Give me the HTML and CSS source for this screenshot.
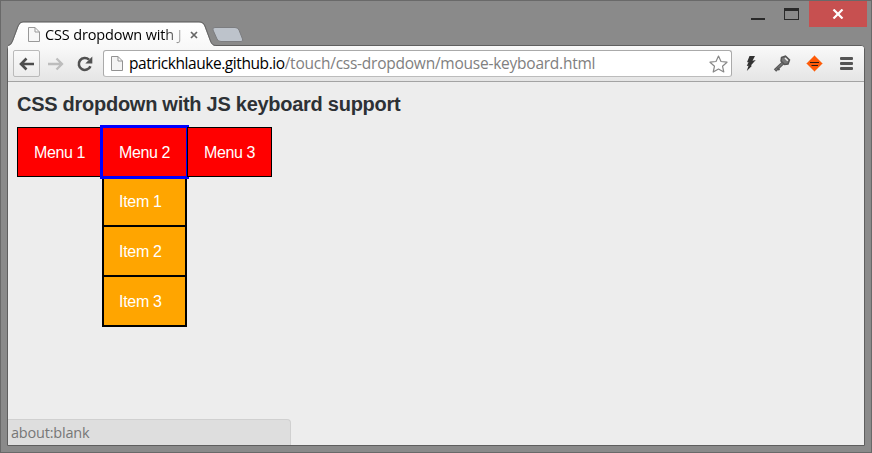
FILE: index.html
```html
<!DOCTYPE html>
<html lang="en">
<head>
<meta charset="utf-8">
<title>CSS dropdown with JS keyboard support</title>
<link rel="stylesheet" href="styles.css">
</head>
<body>
<div class="window">
  <header class="titlebar">
    <div class="tab">
      <svg class="tab-shape" width="208" height="27" viewBox="0 0 208 27">
        <defs><linearGradient id="tabfill" x1="0" y1="0" x2="0" y2="1"><stop offset="0" stop-color="#fff"/><stop offset="1" stop-color="#f8f8f8"/></linearGradient></defs>
        <path d="M0 27V25Q3.5 24.5 5 20L10.500 5.500Q12 1.500 15 1.500H191Q195 1.500 196.500 5.500L202 20Q204 25 208 25V27Z" fill="url(#tabfill)"/>
        <path d="M0 24.500Q3 24 4.500 20L10 5Q11.500 .8 15 .8H191Q195.500 .8 197 5L202.500 20Q204 24.500 208 24.500" fill="none" stroke="#666"/>
      </svg>
      <svg class="tab-page" width="12" height="15" viewBox="0 0 12 15"><path d="M.5 .5H7L11.500 5V14.500H.5Z M7 .5V5H11.500" fill="#f7f7f7" stroke="#999"/></svg>
      <span class="tab-title">CSS dropdown with J</span>
      <svg class="tab-close" width="8" height="8" viewBox="0 0 8 8"><path d="M1 1L7 7M7 1L1 7" stroke="#666" stroke-width="1.700"/></svg>
    </div>
    <svg class="new-tab" width="34" height="18" viewBox="0 0 34 18"><path d="M4 1.500H24Q27 1.500 28 4L31.500 13Q32.500 15.500 30 15.500H10Q7 15.500 6 13L2 4Q1 1.500 4 1.500Z" fill="#bdc3cb" stroke="#7c7d80"/></svg>
    <div class="controls">
      <i class="minimize"></i><i class="maximize"></i>
      <span class="close"><svg width="12" height="10" viewBox="0 0 12 10"><path d="M1.500 .5L10.500 9.500M10.500 .5L1.500 9.500" stroke="#fff" stroke-width="2.200"/></svg></span>
    </div>
  </header>
  <div class="frame">
    <nav class="toolbar">
      <span class="back"><svg width="16" height="14" viewBox="0 0 16 14"><path d="M15 7H2.500M7.500 1.500L2 7L7.500 12.500" fill="none" stroke="#4d4d4d" stroke-width="2.600"/></svg></span>
      <svg class="forward" width="16" height="14" viewBox="0 0 16 14"><path d="M0 7H13.500M8.500 1.500L14 7L8.500 12.500" fill="none" stroke="#bdbdbd" stroke-width="2.300"/></svg>
      <svg class="reload" width="16" height="16" viewBox="0 0 16 16"><path d="M13.400 10.200A6 6 0 1 1 12 3.600" fill="none" stroke="#515151" stroke-width="2.600"/><path d="M15.300 .5V7.500H8.300Z" fill="#515151"/></svg>
      <div class="address">
        <svg class="page" width="12" height="15" viewBox="0 0 12 15"><path d="M.5 .5H7L11.500 5V14.500H.5Z M7 .5V5H11.500" fill="#f4f4f4" stroke="#929292"/></svg>
        <span class="url"><b>patrickhlauke.github.io</b><span>/touch/css-dropdown/mouse-keyboard.html</span></span>
        <svg class="star" width="19" height="18" viewBox="0 0 19 18"><path d="M9.500 1L12 6.500L18 7.200L13.500 11.200L14.800 17L9.500 14L4.200 17L5.500 11.200L1 7.200L7 6.500Z" fill="#fff" stroke="#888" stroke-width="1.200" stroke-linejoin="round"/></svg>
      </div>
      <svg class="bolt" width="10" height="15" viewBox="0 0 10 15"><path d="M3.500 0H9L6.500 4.800L9.800 4L4.800 9.500L6 9.700L.8 15L2.500 9.800L.8 10L2.500 6L1 6.200Z" fill="#333"/></svg>
      <svg class="key" width="18" height="17" viewBox="0 0 18 17"><path d="M10.500 7.500L2 15.500" stroke="#555" stroke-width="3.400"/><path d="M10.500 7.500L2.500 15" stroke="#777" stroke-width="1.400"/><path d="M4.500 13L6.500 15" stroke="#555" stroke-width="1.800"/><path d="M8.500 2.500L12.500 1L16.500 5L15 9L11.500 9.500L8 6Z" fill="#777" stroke="#555" stroke-width="1.500"/><path d="M12 3L14.800 5.800" stroke="#eee" stroke-width="1.500"/></svg>
      <svg class="diamond" width="17" height="17" viewBox="0 0 17 17"><path d="M8.500 .5L16.500 8.500L8.500 16.500L.5 8.500Z" fill="#ff5a08" stroke="#f2a878" stroke-width=".6"/><path d="M4 7.500H13M5.500 10.500H12" stroke="#2d1b12" stroke-width="1.200"/></svg>
      <span class="hamburger"><i></i><i></i><i></i></span>
    </nav>
    <main class="page-body">
      <h1>CSS dropdown with JS keyboard support</h1>
      <ul class="menu">
        <li>Menu 1</li>
        <li class="open">Menu 2
          <ul class="dropdown"><li>Item 1</li><li>Item 2</li><li>Item 3</li></ul>
        </li>
        <li>Menu 3</li>
      </ul>
      <div class="status">about:blank</div>
    </main>
  </div>
</div>
</body>
</html>
```
FILE: styles.css
```css
* { box-sizing: border-box; }
body { margin: 0; overflow: hidden; }
ul { list-style: none; margin: 0; padding: 0; }
svg { display: block; flex: none; }
.window { width: 872px; height: 453px; background: #8a8a8a; border: 1px solid #696969; display: flex; flex-direction: column; padding: 0 6px; }
.titlebar { height: 44px; display: flex; align-items: flex-start; flex: none; font-family: "Open Sans", sans-serif; }
.tab { position: relative; z-index: 2; width: 208px; height: 27px; margin: 20px 0 0 1px; display: flex; align-items: center; flex: none; }
.tab-shape { position: absolute; left: 0; top: 0; }
.tab-page { position: relative; margin-left: 20px; }
.tab-title { position: relative; width: 137px; margin-left: 5px; white-space: nowrap; font: 14.500px/20px "Open Sans", sans-serif; letter-spacing: -.15px; color: #000; -webkit-mask-image: linear-gradient(90deg, #000 86%, transparent 104%); mask-image: linear-gradient(90deg, #000 86%, transparent 104%); }
.tab-close { position: relative; margin-left: 8px; }
.new-tab { margin: 25px 0 0 -5px; }
.controls { display: flex; margin-left: auto; align-items: flex-start; }
.minimize { width: 14px; height: 2px; background: #292929; margin: 17px 19px 0 0; }
.maximize { width: 15px; height: 12px; border: 1px solid #292929; border-top-width: 3px; margin: 7px 10px 0 0; }
.close { width: 58px; height: 26px; background: #c75050; display: flex; align-items: center; justify-content: center; margin-right: -2px; }
.frame { width: 858px; height: 401px; flex: none; border: 1px solid #5e5e5e; border-radius: 4px 4px 0 0; background: #ededed; display: flex; flex-direction: column; overflow: hidden; }
.toolbar { height: 36px; flex: none; display: flex; align-items: center; background: linear-gradient(#f9f9f9, #e5e5e5); border-bottom: 1px solid #a3a3a3; padding-left: 5px; }
.back { width: 27px; height: 27px; border: 1px solid #bababa; border-radius: 2px; background: linear-gradient(#fafafa, #ececec); display: flex; align-items: center; justify-content: center; }
.forward { margin-left: 8px; }
.reload { margin-left: 13px; }
.address { width: 629px; height: 27px; margin-left: 10px; border: 1px solid #aaa; border-bottom-color: #bcbcbc; border-radius: 3px; background: #fff; display: flex; align-items: center; padding: 0 3px 0 7px; }
.url { margin-left: 6px; font: 15.500px/23px "Open Sans", sans-serif; color: #808080; white-space: nowrap; letter-spacing: -.24px; }
.url b { font-weight: 400; color: #000; letter-spacing: -.43px; }
.star { margin-left: auto; }
.bolt { margin-left: 14px; }
.key { margin-left: 17px; }
.diamond { margin-left: 15px; }
.hamburger { margin-left: 17px; width: 13px; display: grid; gap: 2px; }
.hamburger i { height: 3px; background: #555; border-radius: 1px; }
.page-body { position: relative; flex: 1; padding: 10px 9px 0; font: 16px/24px "Liberation Sans", sans-serif; }
h1 { margin: 0 0 11px; font-size: 20px; line-height: 24px; color: #2d3135; letter-spacing: -.27px; }
.menu { display: flex; color: #fff; letter-spacing: -.4px; }
.menu > li { position: relative; width: 85px; height: 50px; background: #f00; border: 1px solid #000; line-height: 49px; padding-left: 16px; }
.menu > .open { outline: 3px solid #00f; outline-offset: -1px; }
.dropdown { position: absolute; left: -1px; top: 51px; width: 85px; border: 2px solid #000; border-top: 0; background: orange; letter-spacing: -.3px; }
.dropdown li { height: 50px; padding-left: 15px; line-height: 50px; }
.dropdown li:first-child { height: 46px; line-height: 45px; }
.dropdown li + li { border-top: 2px solid #000; }
.status { position: absolute; left: 0; bottom: 0; width: 283px; height: 26px; background: #dedede; border: 1px solid #d0d0d0; border-width: 1px 1px 0 0; border-radius: 0 4px 0 0; padding-left: 3px; color: #777; font: 14.500px/26px "Open Sans", sans-serif; letter-spacing: -.2px; }
```
